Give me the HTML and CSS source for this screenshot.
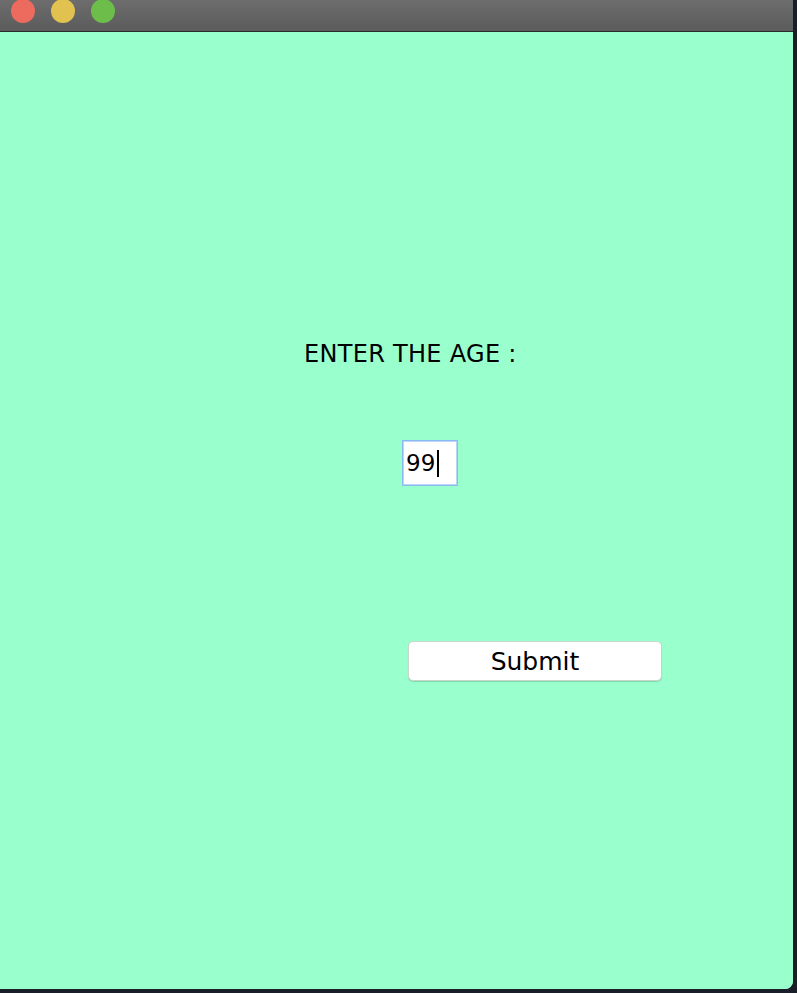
FILE: index.html
```html
<!DOCTYPE html>
<html>
<head>
<meta charset="utf-8">
<link rel="stylesheet" href="styles.css">
</head>
<body>
<div class="window">
  <div class="titlebar">
    <span class="light red"></span>
    <span class="light yellow"></span>
    <span class="light green"></span>
  </div>
  <div class="content">
    <div class="label">ENTER THE AGE :</div>
    <div class="field"><span class="value">99</span><span class="caret"></span></div>
    <button class="submit">Submit</button>
  </div>
</div>
</body>
</html>
```
FILE: styles.css
```css
html, body {
  margin: 0;
  padding: 0;
}
body {
  width: 797px;
  height: 993px;
  background: #1a1e28;
  overflow: hidden;
  font-family: "DejaVu Sans", "Open Sans", sans-serif;
}
.window {
  width: 793px;
  height: 989px;
  display: flex;
  flex-direction: column;
  border-bottom-right-radius: 8px;
  overflow: hidden;
  background: #99ffcc;
}
.titlebar {
  flex: none;
  background: linear-gradient(#6d6d6d, #5b5b5b);
  border-bottom: 1px solid #2b2b2b;
  display: flex;
  align-items: flex-start;
  gap: 16px;
  padding: 0 0 0 11px;
  box-sizing: border-box;
  height: 32px;
}
.light {
  width: 24px;
  height: 24px;
  border-radius: 50%;
  margin-top: -1px;
}
.red { background: #ec6a5e; }
.yellow { background: #e1c14f; }
.green { background: #6cbd4a; }
.content {
  flex: 1;
  background: #99ffcc;
  display: flex;
  flex-direction: column;
  align-items: flex-start;
}
.label {
  margin: 307px 0 0 304px;
  font-size: 24px;
  letter-spacing: 0.3px;
  line-height: 30px;
  color: #000;
}
.field {
  margin: 71px 0 0 402px;
  width: 56px;
  height: 46px;
  box-sizing: border-box;
  border: 1px solid #8ab8f2;
  box-shadow: inset 0 0 0 1px #b9d6f7;
  background: #fff;
  display: flex;
  align-items: center;
  padding-left: 3px;
  font-size: 23px;
  color: #000;
}
.caret {
  width: 2px;
  height: 27px;
  background: #000;
  margin-left: 2px;
}
.submit {
  margin: 155px 0 0 408px;
  width: 254px;
  height: 40px;
  box-sizing: border-box;
  background: #fff;
  border: 1px solid #c8d4cc;
  border-radius: 5px;
  box-shadow: 0 1px 1px rgba(0,0,0,0.15);
  font-family: "DejaVu Sans", "Open Sans", sans-serif;
  font-size: 25px;
  color: #000;
  padding: 0;
}
```
